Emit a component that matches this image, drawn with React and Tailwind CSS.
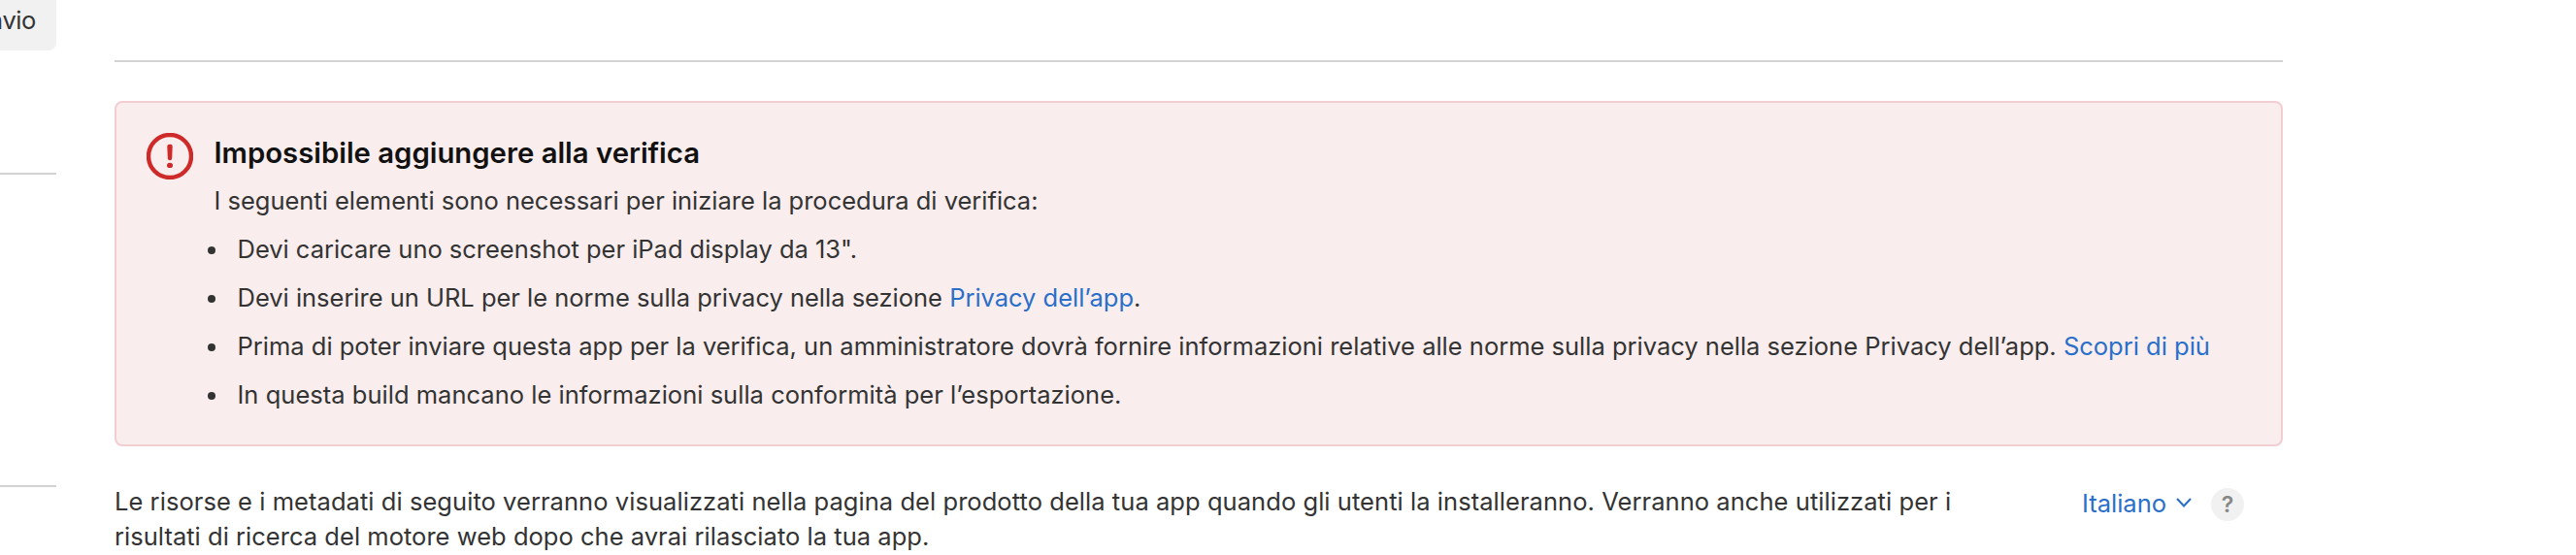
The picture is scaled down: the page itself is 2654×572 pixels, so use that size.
function Link({ children }) {
  return <a className="text-[#2a6fc9]">{children}</a>;
}

function Item({ children, className = "" }) {
  return (
    <li className="flex gap-[22.5px]">
      <span className="mt-[15px] size-2 shrink-0 rounded-full bg-[#333]" />
      <span className={`whitespace-pre ${className}`}>{children}</span>
    </li>
  );
}

function AlertIcon() {
  return (
    <svg className="mt-[31px] size-12 shrink-0" viewBox="0 0 48 48" fill="none">
      <circle cx="24" cy="24" r="22" stroke="#cf2a2a" strokeWidth="4.4" />
      <path d="M21.3 14a2.1 2.1 0 0 1 2.1-2.2h1.2a2.1 2.1 0 0 1 2.1 2.2l-.5 12a2.2 2.2 0 0 1-4.4 0z" fill="#cf2a2a" />
      <ellipse cx="24" cy="33.4" rx="3" ry="2.7" fill="#cf2a2a" />
    </svg>
  );
}

export default function App() {
  return (
    <div className="flex h-[572px] w-[2654px] overflow-hidden bg-white font-['Inter',sans-serif] text-[25.5px] leading-9 text-[#333]">
      <aside className="flex w-[58px] shrink-0 flex-col">
        <div className="flex h-[52px] w-full justify-end overflow-hidden rounded-br-lg bg-[#f1f1f1] pt-[3px] pr-[21px]">
          <span className="tracking-[-0.4px]">Invio</span>
        </div>
        <div className="mt-[126px] h-0.5 bg-[#d2d2d2]" />
        <div className="mt-[320px] h-0.5 bg-[#d2d2d2]" />
      </aside>
      <main className="ml-[60px] flex w-[2234px] flex-col pt-[62px]">
        <div className="h-0.5 shrink-0 bg-[#d2d2d2]" />
        <section className="mt-10 flex h-[356px] shrink-0 rounded-lg border-2 border-[#f2cdd2] bg-[#f9eded] pl-[31px]">
          <AlertIcon />
          <div className="ml-[15px] flex flex-col pt-8">
            <h2 className="pl-[6.5px] text-[29.3px] leading-10 font-semibold whitespace-pre text-[#111]">Impossibile aggiungere alla verifica</h2>
            <p className="mt-[11px] pl-[6.5px] tracking-[-0.016px] whitespace-pre">I seguenti elementi sono necessari per iniziare la procedura di verifica:</p>
            <ul className="mt-3.5 flex flex-col gap-3.5">
              <Item className="tracking-[-0.02px]">Devi caricare uno screenshot per iPad display da 13".</Item>
              <Item className="tracking-[-0.015px]">
                Devi inserire un URL per le norme sulla privacy nella sezione <Link>Privacy dell’app</Link>.
              </Item>
              <Item>
                Prima di poter inviare questa app per la verifica, un amministratore dovrà fornire informazioni relative alle norme sulla privacy nella sezione Privacy dell’app. <Link>Scopri di più</Link>
              </Item>
              <Item className="tracking-[0.02px]">In questa build mancano le informazioni sulla conformità per l’esportazione.</Item>
            </ul>
          </div>
        </section>
        <div className="mt-[39px] flex">
          <p className="w-[2027px] shrink-0 whitespace-pre">
            <span className="tracking-[0.054px]">Le risorse e i metadati di seguito verranno visualizzati nella pagina del prodotto della tua app quando gli utenti la installeranno. Verranno anche utilizzati per i</span>
            <br />
            <span className="tracking-[0.027px]">risultati di ricerca del motore web dopo che avrai rilasciato la tua app.</span>
          </p>
          <div className="-mt-px flex h-11 items-center">
            <span className="w-[97px] pb-0.5 text-[#2a6fc9]">Italiano</span>
            <svg className="mb-1 size-4" viewBox="0 0 16 16" fill="none">
              <path d="M1 4l7 7.5L15 4" stroke="#2a6fc9" strokeWidth="2.1" />
            </svg>
            <span className="ml-5 flex size-[34px] items-center justify-center rounded-full bg-[#f1f1f1] text-[23px] font-semibold text-[#888]">?</span>
          </div>
        </div>
      </main>
    </div>
  );
}
